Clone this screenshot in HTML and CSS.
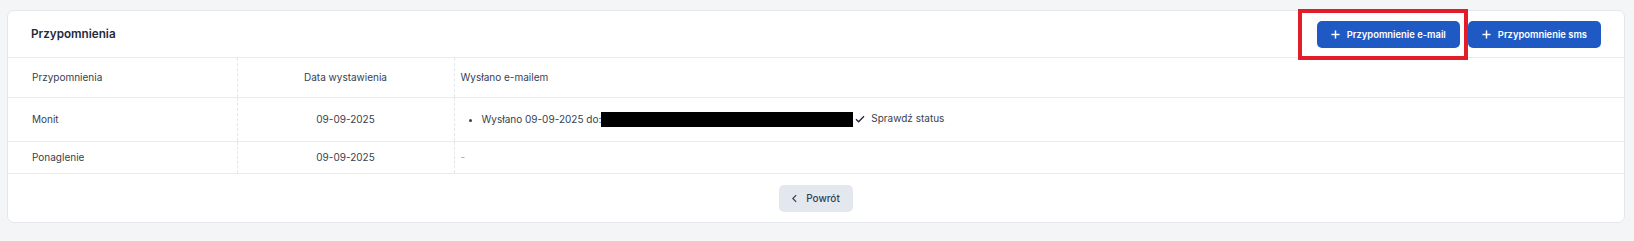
FILE: index.html
```html
<!DOCTYPE html>
<html>
<head>
    <title>Przypomnienia</title>
    <link rel="stylesheet" href="styles.css">
</head>
<body>
    <div class="card">
        <div class="card-header">
            <h2 class="card-title">Przypomnienia</h2>
            <div class="actions">
                <div class="highlight-wrap">
                    <button class="btn btn-primary">
                        <svg class="plus" viewBox="0 0 10 10" width="9" height="9">
                            <line x1="5" y1="0.5" x2="5" y2="9.5"></line>
                            <line x1="0.5" y1="5" x2="9.5" y2="5"></line>
                        </svg>
                        Przypomnienie e-mail
                    </button>
                    <span class="highlight"></span>
                </div>
                <button class="btn btn-primary">
                    <svg class="plus" viewBox="0 0 10 10" width="9" height="9">
                        <line x1="5" y1="0.5" x2="5" y2="9.5"></line>
                        <line x1="0.5" y1="5" x2="9.5" y2="5"></line>
                    </svg>
                    Przypomnienie sms
                </button>
            </div>
        </div>

        <table class="reminders">
            <thead>
                <tr>
                    <th class="col-name">Przypomnienia</th>
                    <th class="col-date">Data wystawienia</th>
                    <th class="col-sent">Wysłano e-mailem</th>
                </tr>
            </thead>
            <tbody>
                <tr>
                    <td class="col-name">Monit</td>
                    <td class="col-date">09-09-2025</td>
                    <td class="col-sent">
                        <ul class="sent-list">
                            <li>
                                Wysłano 09-09-2025 do:<span class="redacted"></span><span class="status">
                                    <svg viewBox="0 0 10 8" width="10" height="8">
                                        <polyline points="1 4.2 3.6 6.8 9 1.2"></polyline>
                                    </svg>
                                    Sprawdź status
                                </span>
                            </li>
                        </ul>
                    </td>
                </tr>
                <tr class="short">
                    <td class="col-name">Ponaglenie</td>
                    <td class="col-date">09-09-2025</td>
                    <td class="col-sent empty">-</td>
                </tr>
            </tbody>
        </table>

        <div class="card-footer">
            <button class="btn btn-light">
                <svg viewBox="0 0 6 10" width="5" height="9" class="chev">
                    <polyline points="5 1 1 5 5 9"></polyline>
                </svg>
                Powrót
            </button>
        </div>
    </div>
</body>
</html>
```

FILE: styles.css
```css
* {
    margin: 0;
    padding: 0;
    box-sizing: border-box;
}

body {
    font-family: 'Inter', 'Noto Sans', Arial, sans-serif;
    background-color: #f4f5f7;
    color: #374151;
    font-size: 10px;
    padding: 10px 9px 0 7px;
    height: 241px;
    overflow: hidden;
}

.card {
    background-color: #ffffff;
    border: 1px solid #e4e7eb;
    border-radius: 7px;
}

.card-header {
    display: flex;
    align-items: center;
    justify-content: space-between;
    padding: 9px 23px 9px 23px;
    border-bottom: 1px solid #e8eaee;
    height: 47px;
}

.card-title {
    font-size: 11.7px;
    font-weight: 600;
    color: #1f2a3c;
}

.actions {
    display: flex;
    gap: 8px;
}

.highlight-wrap {
    position: relative;
}

.highlight {
    position: absolute;
    left: -19px;
    right: -8px;
    top: -12px;
    bottom: -12px;
    border: 4px solid #e11d2a;
    pointer-events: none;
}

.btn {
    display: flex;
    align-items: center;
    gap: 7px;
    height: 27px;
    padding: 0 14px;
    border: none;
    border-radius: 5px;
    font-family: inherit;
    font-size: 9.4px;
    font-weight: 600;
    cursor: pointer;
}

.btn-primary {
    background-color: #1f5ac4;
    color: #ffffff;
}

.plus {
    stroke: #ffffff;
    stroke-width: 1.6;
}

.btn-light {
    background-color: #e3e8ee;
    color: #334155;
    font-size: 10px;
    font-weight: 500;
    padding: 0 13px;
    gap: 9px;
}

.chev {
    fill: none;
    stroke: #334155;
    stroke-width: 1.5;
}

.reminders {
    width: 100%;
    border-collapse: collapse;
}

.reminders th,
.reminders td {
    font-weight: 400;
    text-align: left;
    line-height: 15px;
    border-bottom: 1px solid #e8eaee;
    color: #374151;
}

.reminders th {
    height: 39px;
}

.reminders td {
    height: 44px;
}

.reminders tr.short td {
    height: 32px;
}

.col-name {
    width: 229px;
    padding: 0 24px;
    border-right: 1px dashed #e3e6ea;
}

.reminders .col-date {
    width: 217px;
    text-align: center;
    border-right: 1px dashed #e3e6ea;
}

.col-sent {
    padding: 0 6px;
}

.sent-list {
    padding-left: 21px;
}

.redacted {
    display: inline-block;
    width: 252px;
    height: 15px;
    background-color: #000000;
    vertical-align: -4px;
}

.status {
    display: inline-flex;
    align-items: center;
    gap: 6px;
    margin-left: 2px;
}

.status svg {
    fill: none;
    stroke: #1f2937;
    stroke-width: 1.3;
}

.reminders td.empty {
    color: #9ca3af;
}

.card-footer {
    display: flex;
    justify-content: center;
    padding: 11px 0 10px;
}
```
